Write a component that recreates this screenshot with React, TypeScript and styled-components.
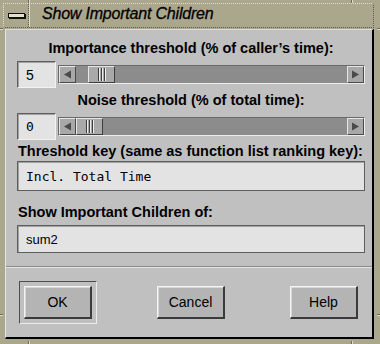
import React from 'react';
import styled, { createGlobalStyle } from 'styled-components';

const GlobalStyle = createGlobalStyle`
  html, body {
    margin: 0;
    padding: 0;
    background: #aba78d;
  }
  body {
    font-family: 'Liberation Sans', Arial, sans-serif;
  }
`;

const Frame = styled.div`
  position: relative;
  box-sizing: border-box;
  width: 380px;
  height: 344px;
  padding: 3px 6px 5px 3px;
  background: #aba78d;
  display: flex;
  flex-direction: column;
`;

const Tick = styled.span<{ $side: 'top' | 'bottom' | 'left' | 'right'; $at: number }>`
  position: absolute;
  background: #6f6b58;
  ${(p) =>
    p.$side === 'top' || p.$side === 'bottom'
      ? `width: 1px; height: 3px; left: ${p.$at}px; ${p.$side}: 0; box-shadow: 1px 0 0 #dedac6;`
      : `height: 1px; width: 3px; top: ${p.$at}px; ${p.$side}: 0; box-shadow: 0 1px 0 #dedac6;`}
`;

const TitleBar = styled.div`
  display: flex;
  height: 25px;
  box-sizing: border-box;
  border-top: 1px dotted #e2decb;
  border-left: 1px dotted #e2decb;
  border-bottom: 1px dotted #5f5b4a;
  border-right: 1px dotted #5f5b4a;
  background: #aba78d;
`;

const MenuButton = styled.div`
  width: 25px;
  box-sizing: border-box;
  display: flex;
  align-items: center;
  justify-content: center;
  border-right: 1px dotted #5f5b4a;
  box-shadow: 1px 0 0 #e2decb;
  padding-bottom: 1px;
`;

const MinusGlyph = styled.span`
  display: block;
  width: 15px;
  height: 3px;
  border: 1px solid #111;
  background: #e4e0cc;
  box-shadow: 1px 1px 0 #111;
`;

const TitleText = styled.div`
  display: flex;
  align-items: center;
  padding: 0 0 3px 13px;
  font-style: italic;
  font-size: 16px;
  letter-spacing: -0.2px;
  color: #000;
  -webkit-text-stroke: 0.3px #000;
`;

const Panel = styled.div`
  margin: 1px 0 0 2px;
  background: #c0c0c0;
  border-top: 1px solid #dcdcdc;
  border-left: 1px solid #e4e4e4;
  border-right: 2px solid #000;
  border-bottom: 2px solid #000;
  display: flex;
  flex-direction: column;
`;

const Body = styled.div`
  display: flex;
  flex-direction: column;
  padding: 0 7px 0 11px;
`;

const Label = styled.div<{ $center?: boolean; $gap: number }>`
  margin-top: ${(p) => p.$gap}px;
  padding-left: ${(p) => (p.$center ? 0 : 1)}px;
  text-align: ${(p) => (p.$center ? 'center' : 'left')};
  font-weight: bold;
  font-size: 14.5px;
  line-height: 17px;
  color: #000;
  white-space: nowrap;
`;

const ValueRow = styled.div`
  margin-top: 4px;
  display: flex;
  align-items: center;
  gap: 2px;
  height: 27px;
`;

const Field = styled.div<{ $mono?: boolean; $height: number; $gap?: number; $raisedEdge?: boolean; $size?: number }>`
  box-sizing: border-box;
  height: ${(p) => p.$height}px;
  margin-top: ${(p) => p.$gap ?? 0}px;
  display: flex;
  align-items: center;
  padding-left: 8px;
  background: #e3e3e3;
  border: 1px solid;
  border-color: ${(p) =>
    p.$raisedEdge ? '#5e5e5e #f2f2f2 #f2f2f2 #5e5e5e' : '#5e5e5e'};
  box-shadow: inset 1px 1px 0 #a2a2a2;
  font-family: ${(p) =>
    p.$mono ? "'DejaVu Sans Mono', 'Liberation Mono', monospace" : "'Liberation Sans', Arial, sans-serif"};
  font-size: ${(p) => p.$size ?? 13}px;
  color: #000;
  white-space: nowrap;
`;

const ValueField = styled(Field)`
  width: 39px;
  flex: none;
`;

const Scale = styled.div`
  flex: 1;
  height: 19px;
  box-sizing: border-box;
  display: flex;
  border: 1px solid;
  border-color: #6a6a6a #ededed #ededed #6a6a6a;
  background: #8c8c8c;
`;

const ArrowBox = styled.div`
  width: 17px;
  height: 17px;
  box-sizing: border-box;
  flex: none;
  display: flex;
  align-items: center;
  justify-content: center;
  background: #a8a8a8;
  border: 1px solid;
  border-color: #e6e6e6 #4a4a4a #4a4a4a #e6e6e6;
`;

const Trough = styled.div`
  flex: 1;
  display: flex;
`;

const Thumb = styled.div`
  width: 27px;
  height: 17px;
  box-sizing: border-box;
  display: flex;
  align-items: stretch;
  justify-content: center;
  gap: 2px;
  padding: 1px 0;
  background: #a9a9a9;
  border: 1px solid;
  border-color: #e6e6e6 #3e3e3e #3e3e3e #e6e6e6;
`;

const Grip = styled.span`
  width: 1px;
  background: #3e3e3e;
  box-shadow: 1px 0 0 #eeeeee;
`;

const Separator = styled.div`
  margin-top: 13px;
  height: 1px;
  background: #8a8a8a;
  border-bottom: 1px solid #e4e4e4;
`;

const ButtonRow = styled.div`
  margin: 13px 0 13px;
  padding: 0 9px 0 13px;
  display: flex;
  justify-content: space-between;
`;

const Slot = styled.div<{ $default?: boolean }>`
  width: 78px;
  height: 43px;
  box-sizing: border-box;
  display: flex;
  align-items: center;
  justify-content: center;
  border: 1px solid;
  border-color: ${(p) => (p.$default ? '#4e4e4e #ececec #ececec #4e4e4e' : 'transparent')};
`;

const PushButton = styled.button`
  width: 68px;
  height: 33px;
  box-sizing: border-box;
  padding: 0;
  background: #b4b4b4;
  border-style: solid;
  border-width: 1px 2px 2px 1px;
  border-color: #f4f4f4 #3a3a3a #3a3a3a #f4f4f4;
  box-shadow: inset 1px 1px 0 #d6d6d6;
  font-family: 'Liberation Sans', Arial, sans-serif;
  font-size: 14px;
  color: #000;
`;

const Arrow = ({ dir }: { dir: 'left' | 'right' }) => (
  <svg width="9" height="9" viewBox="0 0 9 9">
    <polygon
      points={dir === 'left' ? '1,4.5 8,0.5 8,8.5' : '1,0.5 8,4.5 1,8.5'}
      fill="#4a4a4a"
    />
  </svg>
);

const ScaleBar = ({ value }: { value: number }) => {
  // the trough is 268px wide, thumb 27px
  const offset = Math.round(((268 - 27) * value) / 100);
  return (
    <Scale>
      <ArrowBox>
        <Arrow dir="left" />
      </ArrowBox>
      <Trough>
        <Thumb style={{ marginLeft: offset }}>
          <Grip />
          <Grip />
          <Grip />
        </Thumb>
      </Trough>
      <ArrowBox>
        <Arrow dir="right" />
      </ArrowBox>
    </Scale>
  );
};

const App = () => (
  <>
    <GlobalStyle />
    <Frame>
      <Tick $side="top" $at={28} />
      <Tick $side="top" $at={351} />
      <Tick $side="bottom" $at={28} />
      <Tick $side="bottom" $at={351} />
      <Tick $side="left" $at={28} />
      <Tick $side="left" $at={314} />
      <Tick $side="right" $at={28} />
      <Tick $side="right" $at={314} />
      <TitleBar>
        <MenuButton>
          <MinusGlyph />
        </MenuButton>
        <TitleText>Show Important Children</TitleText>
      </TitleBar>
      <Panel>
        <Body>
          <Label $center $gap={10}>
            Importance threshold (% of caller’s time):
          </Label>
          <ValueRow>
            <ValueField $height={27} $size={14} $raisedEdge>
              5
            </ValueField>
            <ScaleBar value={5} />
          </ValueRow>
          <Label $center $gap={4}>
            Noise threshold (% of total time):
          </Label>
          <ValueRow>
            <ValueField $mono $height={27} $raisedEdge>
              0
            </ValueField>
            <ScaleBar value={0} />
          </ValueRow>
          <Label $gap={3}>Threshold key (same as function list ranking key):</Label>
          <Field $mono $height={30} $gap={1}>
            Incl. Total Time
          </Field>
          <Label $gap={13}>Show Important Children of:</Label>
          <Field $height={28} $gap={4}>
            sum2
          </Field>
        </Body>
        <Separator />
        <ButtonRow>
          <Slot $default>
            <PushButton type="button">OK</PushButton>
          </Slot>
          <Slot>
            <PushButton type="button">Cancel</PushButton>
          </Slot>
          <Slot>
            <PushButton type="button">Help</PushButton>
          </Slot>
        </ButtonRow>
      </Panel>
    </Frame>
  </>
);

export default App;
